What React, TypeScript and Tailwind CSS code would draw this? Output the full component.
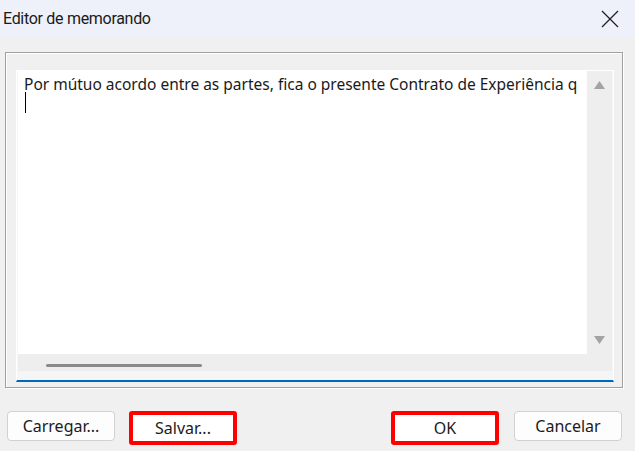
import React from "react";

function Btn({ label, marked }: { label: string; marked?: boolean }) {
  if (marked) {
    return (
      <div className="w-[108px] h-[34px] border-4 border-[#ff0000] rounded-[3px] bg-white flex items-center justify-center text-[16px] text-[#1b1b1b]">
        {label}
      </div>
    );
  }
  return (
    <div className="w-[108px] h-[30px] border border-[#d1d1d1] rounded-[4px] bg-[#fdfdfd] flex items-center justify-center text-[16px] text-[#1b1b1b]">
      {label}
    </div>
  );
}

export default function App() {
  return (
    <div
      className="w-[635px] h-[451px] bg-[#f0f0f0] flex flex-col overflow-hidden"
      style={{ fontFamily: '"Noto Sans", "Open Sans", sans-serif' }}
    >
      <div className="h-[37px] bg-[#eef1f9] flex items-center justify-between pl-[3px] pr-[16px] shrink-0">
        <span className="text-[16px] tracking-[-0.3px] text-[#1a1a1a] font-[Roboto,sans-serif]">
          Editor de memorando
        </span>
        <svg width="18" height="18" viewBox="0 0 18 18">
          <path d="M1 1 L17 17 M17 1 L1 17" stroke="#222" strokeWidth="1.3" />
        </svg>
      </div>

      <div className="pl-[5px] pt-[15px]">
        <div className="w-[618px] h-[336px] border border-[#a0a0a0] shadow-[inset_1px_1px_0_#ffffff,1px_1px_0_#ffffff] pt-[17px] pl-[10px]">
          <div className="w-[598px] h-[312px] bg-[#f5f5f5] border-x border-t border-[#ffffff] border-b-2 border-b-[#0067c0] flex flex-col">
            <div className="flex h-[283px] pl-[1px]">
              <div className="w-[569px] h-full bg-white pl-[6px] pt-[3px] text-[15.5px] text-[#1a1a1a] overflow-hidden whitespace-nowrap leading-[20px]">
                <div>Por mútuo acordo entre as partes, fica o presente Contrato de Experiência q</div>
                <div className="w-[1px] h-[21px] bg-black -mt-[2px] ml-[1px]" />
              </div>
              <div className="w-[25px] h-full bg-[#eeeeee] flex flex-col items-center justify-between py-[10px]">
                <svg width="11" height="8" viewBox="0 0 11 8">
                  <path d="M5.5 0 L11 8 L0 8 Z" fill="#a3a3a3" />
                </svg>
                <svg width="11" height="8" viewBox="0 0 11 8">
                  <path d="M0 0 L11 0 L5.5 8 Z" fill="#a3a3a3" />
                </svg>
              </div>
            </div>
            <div className="h-[17px] bg-[#eeeeee] w-[594px] ml-[1px] flex items-center pl-[28px]">
              <div className="w-[156px] h-[3px] rounded-full bg-[#8a8a8a] mt-[6px]" />
            </div>
          </div>
        </div>
      </div>

      <div className="flex items-start pl-[7px] pt-[23px]">
        <Btn label="Carregar..." />
        <div className="ml-[14px]">
          <Btn label="Salvar..." marked />
        </div>
        <div className="ml-[154px]">
          <Btn label="OK" marked />
        </div>
        <div className="ml-[15px]">
          <Btn label="Cancelar" />
        </div>
      </div>
    </div>
  );
}
